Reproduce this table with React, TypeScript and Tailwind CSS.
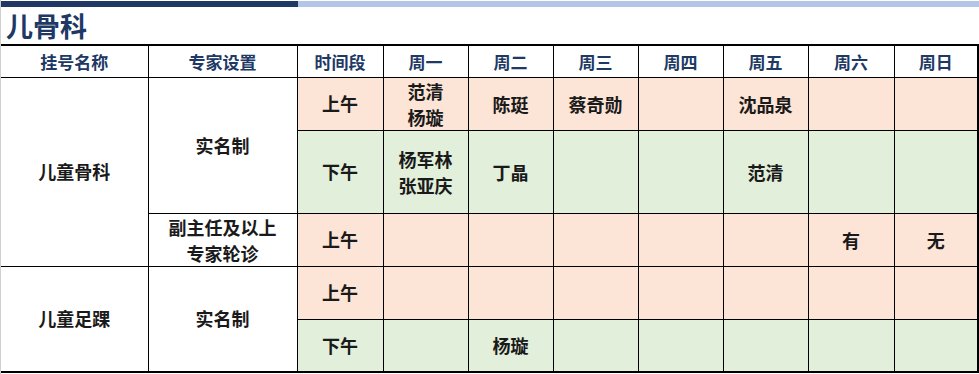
import React from "react";

const days = ["周一", "周二", "周三", "周四", "周五", "周六", "周日"];

type Slot = {
	time: string;
	tone: "am" | "pm";
	cells: string[][];
	h: string;
};

const peach = "bg-[#fce4d6]";
const green = "bg-[#e2efda]";

function Names({ lines }: { lines: string[] }) {
	return (
		<div className="flex flex-col items-center leading-[26px]">
			{lines.map((l) => (
				<span key={l}>{l}</span>
			))}
		</div>
	);
}

export default function App() {
	const cell = "border border-black text-center align-middle p-0";
	const rows: Slot[] = [
		{
			time: "上午",
			tone: "am",
			h: "h-[53px]",
			cells: [["范清", "杨璇"], ["陈珽"], ["蔡奇勋"], [], ["沈品泉"], [], []],
		},
		{
			time: "下午",
			tone: "pm",
			h: "h-[83px]",
			cells: [["杨军林", "张亚庆"], ["丁晶"], [], [], ["范清"], [], []],
		},
		{
			time: "上午",
			tone: "am",
			h: "h-[53px]",
			cells: [[], [], [], [], [], ["有"], ["无"]],
		},
		{
			time: "上午",
			tone: "am",
			h: "h-[53px]",
			cells: [[], [], [], [], [], [], []],
		},
		{
			time: "下午",
			tone: "pm",
			h: "h-[53px]",
			cells: [[], ["杨璇"], [], [], [], [], []],
		},
	];

	return (
		<div
			className="w-[979px] h-[374px] bg-white border-l border-[#d0d0d0] overflow-hidden text-[#1a1a1a]"
			style={{ fontFamily: '"Microsoft YaHei", "Noto Sans CJK SC", sans-serif' }}
		>
			<div className="flex h-[6px] mt-px">
				<div className="w-[297px] bg-[#203864]" />
				<div className="flex-1 bg-[#b4c6e7]" />
			</div>
			<div className="h-[37px] pl-[5px] flex items-center">
				<h1 className="text-[27px] font-bold text-[#203864] leading-none">儿骨科</h1>
			</div>
			<table className="border-collapse table-fixed w-[977px] border-t-2 border-r-2 border-b-2 border-black font-bold text-[18px]">
				<colgroup>
					<col className="w-[147px]" />
					<col className="w-[149px]" />
					<col className="w-[86px]" />
					<col className="w-[85px]" />
					<col className="w-[85px]" />
					<col className="w-[85px]" />
					<col className="w-[85px]" />
					<col className="w-[85px]" />
					<col className="w-[86px]" />
					<col className="w-[84px]" />
				</colgroup>
				<thead>
					<tr className="h-[32px] text-[#203864] text-[17px]">
						<th className={`${cell} border-l-0`}>挂号名称</th>
						<th className={cell}>专家设置</th>
						<th className={cell}>时间段</th>
						{days.map((d) => (
							<th key={d} className={cell}>
								{d}
							</th>
						))}
					</tr>
				</thead>
				<tbody>
					{rows.map((r, i) => (
						<tr key={i} className={r.h}>
							{i === 0 && (
								<td rowSpan={3} className={`${cell} border-l-0`}>
									儿童骨科
								</td>
							)}
							{i === 3 && (
								<td rowSpan={2} className={`${cell} border-l-0`}>
									儿童足踝
								</td>
							)}
							{i === 0 && (
								<td rowSpan={2} className={cell}>
									实名制
								</td>
							)}
							{i === 2 && (
								<td className={cell}>
									<Names lines={["副主任及以上", "专家轮诊"]} />
								</td>
							)}
							{i === 3 && (
								<td rowSpan={2} className={cell}>
									实名制
								</td>
							)}
							<td className={`${cell} ${r.tone === "am" ? peach : green}`}>{r.time}</td>
							{r.cells.map((c, j) => (
								<td key={j} className={`${cell} ${r.tone === "am" ? peach : green}`}>
									{c.length > 0 && <Names lines={c} />}
								</td>
							))}
						</tr>
					))}
				</tbody>
			</table>
		</div>
	);
}
